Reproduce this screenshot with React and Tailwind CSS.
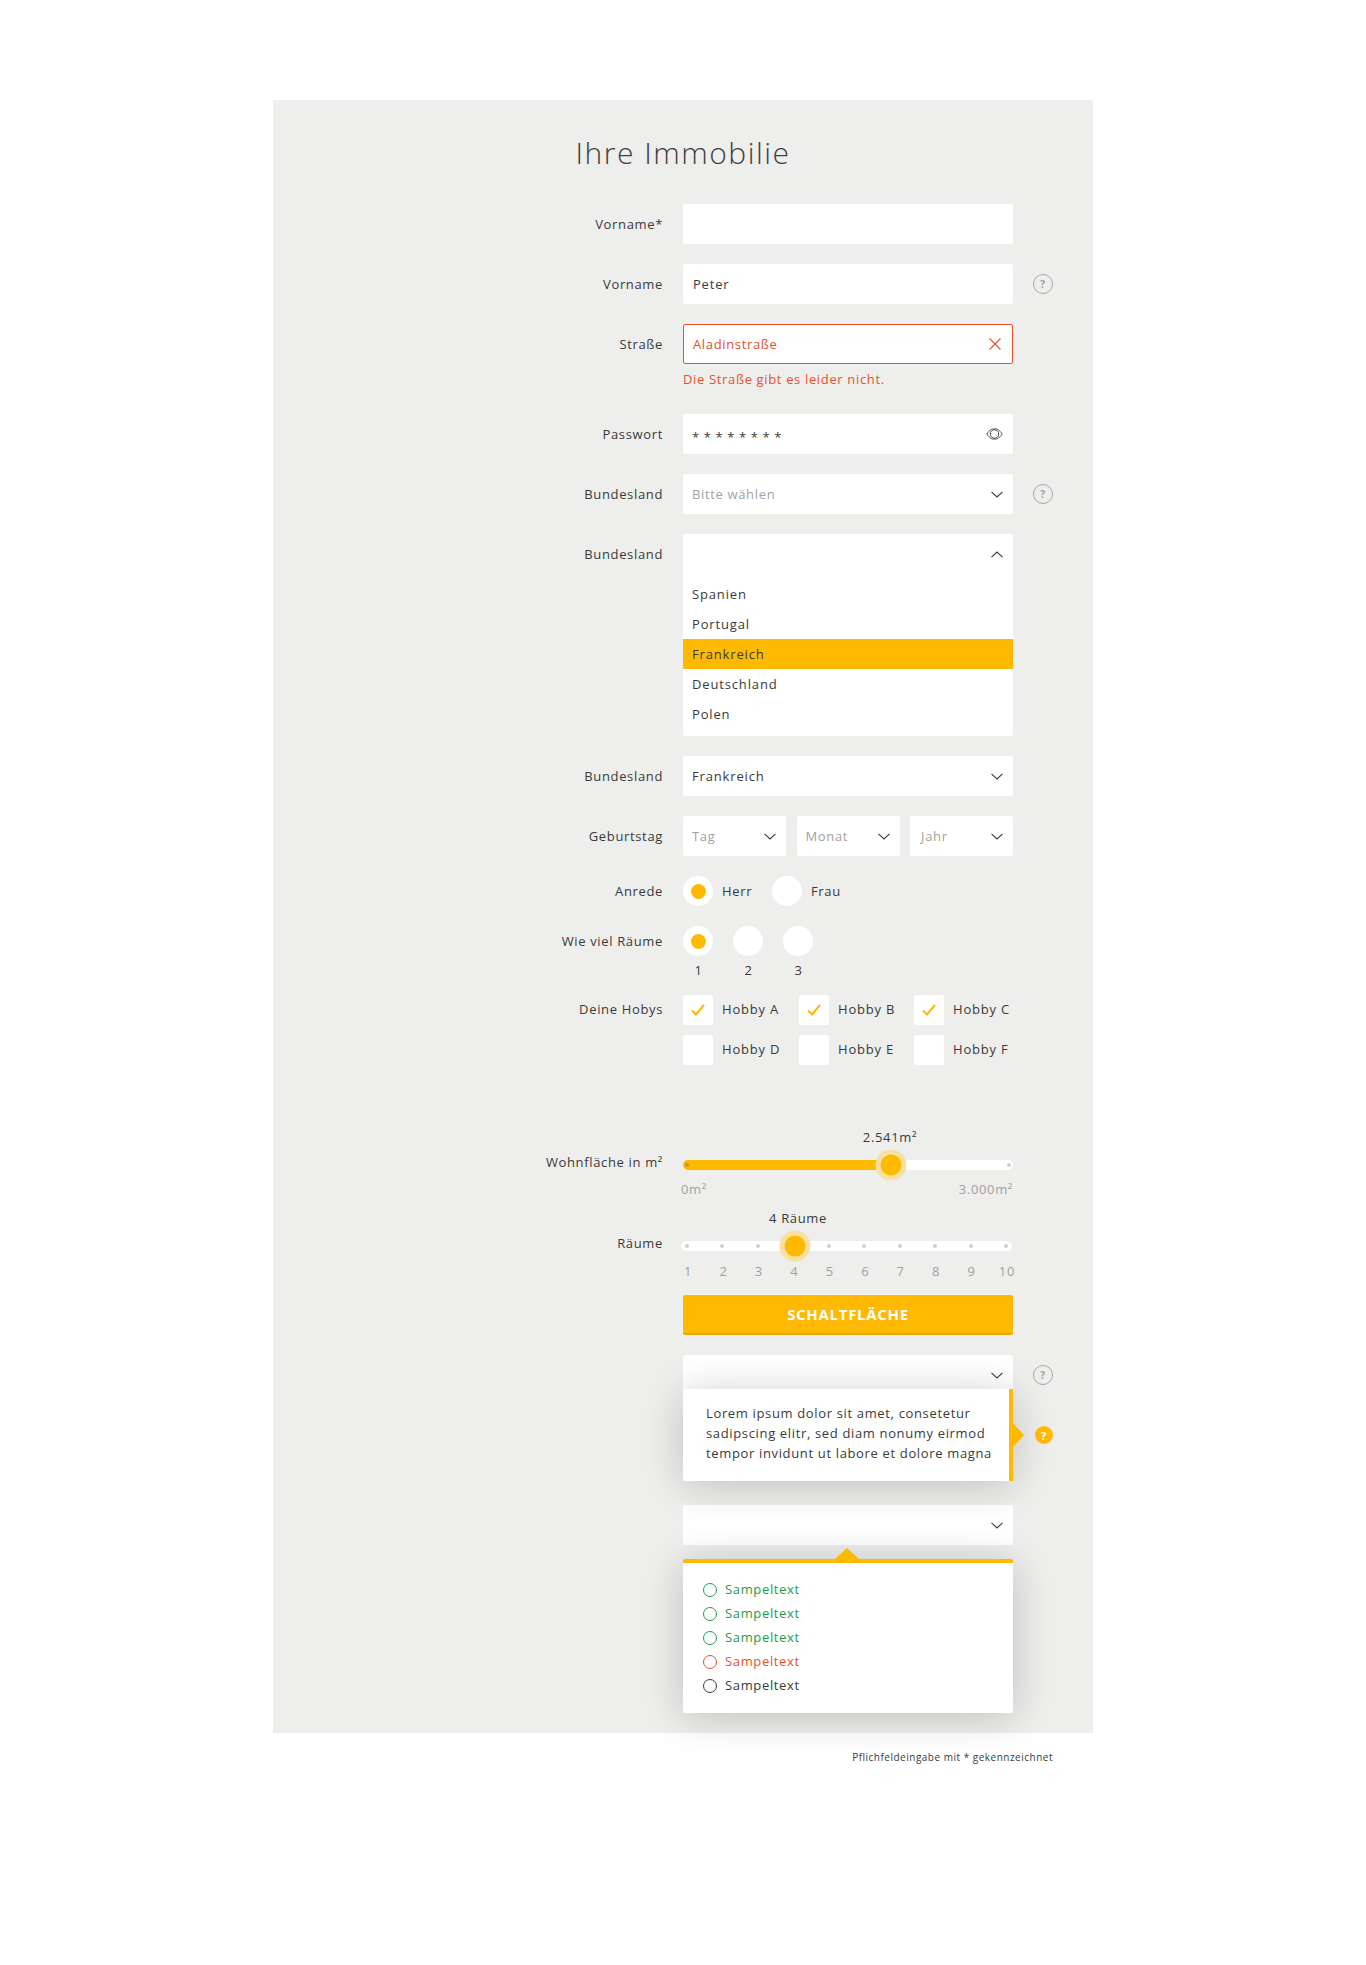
import React from 'react';

const Chevron = ({ up = false }) => (
  <svg width="12" height="7" viewBox="0 0 12 7" fill="none" stroke="#3a3a3a" strokeWidth="1.1" className={up ? 'rotate-180' : ''}>
    <path d="M0.5 0.8 L6 6 L11.5 0.8" />
  </svg>
);

const Help = () => (
  <span className="flex h-5 w-5 items-center justify-center rounded-full border border-[#a8a8a8] text-[10px] font-bold leading-none text-[#a0a0a0]">?</span>
);

const Row = ({ label, labelClass = 'leading-10', className = '', side = null, children }) => (
  <div className={`flex items-start ${className}`}>
    <div className={`w-[390px] shrink-0 text-right ${labelClass}`}>{label}</div>
    <div className="ml-5 w-[330px] shrink-0">{children}</div>
    {side && <div className="ml-5 flex h-10 w-5 items-center justify-center">{side}</div>}
  </div>
);

const Field = ({ children, className = '' }) => (
  <div className={`flex h-10 items-center justify-between rounded-[2px] bg-white leading-10 ${className}`}>{children}</div>
);

const Select = ({ text, placeholder = false, textClass = '', className = '' }) => (
  <Field className={`pl-[9px] pr-[10px] ${className}`}>
    <span className={`${placeholder ? 'text-[#a2a2a2]' : ''} ${textClass}`}>{text}</span>
    <Chevron />
  </Field>
);

const Radio = ({ on = false }) => (
  <span className="flex h-[30px] w-[30px] items-center justify-center rounded-full bg-white">
    {on && <span className="h-[15px] w-[15px] rounded-full bg-[#ffb900]" />}
  </span>
);

const Check = ({ on = false, label, className = '' }) => (
  <div className={`flex items-center ${className}`}>
    <span className="flex h-[30px] w-[30px] items-center justify-center rounded-[2px] bg-white">
      {on && (
        <svg width="14" height="12" viewBox="0 0 14 12" fill="none" stroke="#ffb900" strokeWidth="2">
          <path d="M1 6.5 L5 10.5 L13 1" />
        </svg>
      )}
    </span>
    <span className="ml-[9px] font-medium tracking-[0.8px]">{label}</span>
  </div>
);

const Thumb = ({ className }) => (
  <span className={`absolute top-1/2 flex h-[31px] w-[31px] -translate-x-1/2 -translate-y-1/2 items-center justify-center rounded-full bg-[#f6e0a2] ${className}`}>
    <span className="h-[21px] w-[21px] rounded-full bg-[#ffb900]" />
  </span>
);

const roomSteps = [1, 2, 3, 4, 5, 6, 7, 8, 9, 10];

const samples = [
  ['text-[#1b9e4b]', 'border-[#1b9e4b]'],
  ['text-[#1b9e4b]', 'border-[#1b9e4b]'],
  ['text-[#1b9e4b]', 'border-[#1b9e4b]'],
  ['text-[#e8502c]', 'border-[#e8502c]'],
  ['text-[#3a3a3a]', 'border-[#3a3a3a]'],
];

export default function App() {
  return (
    <div className="min-h-[1965px] bg-white pt-[100px] text-[13px] tracking-[0.65px] text-[#3a3a3a] [font-family:'Open_Sans',sans-serif]">
      <div className="mx-auto w-[820px] bg-[#eeeeec] pb-5 pt-[33px]">
        <h1 className="text-center text-[30px] font-light leading-10 tracking-[1.5px] text-[#3f3f3f]">Ihre Immobilie</h1>

        <Row label="Vorname*" className="mt-[31px]">
          <Field />
        </Row>
        <Row label="Vorname" className="mt-5" side={<Help />}>
          <Field className="px-[10px] font-medium tracking-[0.8px]">Peter</Field>
        </Row>
        <Row label="Straße" className="mt-5">
          <Field className="border border-[#e8502c] px-[9px] text-[#e8502c]">
            Aladinstraße
            <svg width="12" height="12" viewBox="0 0 12 12" fill="none" stroke="#e8502c" strokeWidth="1.1" className="mr-[2px]">
              <path d="M0.5 0.5 L11.5 11.5 M11.5 0.5 L0.5 11.5" />
            </svg>
          </Field>
          <p className="mt-[5px] leading-5 text-[#e8502c]">Die Straße gibt es leider nicht.</p>
        </Row>
        <Row label="Passwort" className="mt-[25px]">
          <Field className="pl-[9px] pr-[10px]">
            <span className="pt-[6px] tracking-[4.6px]">********</span>
            <svg width="17" height="12" viewBox="0 0 17 12" fill="none" stroke="#3a3a3a" strokeWidth="0.9">
              <path d="M0.8 6 C3.5 1.8 6 0.8 8.5 0.8 C11 0.8 13.5 1.8 16.2 6 C13.5 10.2 11 11.2 8.5 11.2 C6 11.2 3.5 10.2 0.8 6 Z" />
              <ellipse cx="8.5" cy="6" rx="4.2" ry="4.2" />
            </svg>
          </Field>
        </Row>
        <Row label="Bundesland" className="mt-5" side={<Help />}>
          <Select text="Bitte wählen" placeholder />
        </Row>
        <Row label="Bundesland" className="mt-5">
          <div className="rounded-[2px] bg-white pb-[7px]">
            <div className="flex h-10 items-center justify-end pr-[10px]">
              <Chevron up />
            </div>
            <div className="mt-[5px] font-medium tracking-[0.85px]">
              <div className="h-[30px] pl-[9px] leading-[30px]">Spanien</div>
              <div className="h-[30px] pl-[9px] leading-[30px]">Portugal</div>
              <div className="h-[30px] bg-[#ffb900] pl-[9px] leading-[30px]">Frankreich</div>
              <div className="h-[30px] pl-[9px] leading-[30px]">Deutschland</div>
              <div className="h-[30px] pl-[9px] leading-[30px]">Polen</div>
            </div>
          </div>
        </Row>
        <Row label="Bundesland" className="mt-5">
          <Select text="Frankreich" className="font-medium tracking-[0.85px]" />
        </Row>
        <Row label="Geburtstag" className="mt-5">
          <div className="grid grid-cols-3 gap-[10.5px]">
            <Select text="Tag" placeholder />
            <Select text="Monat" placeholder />
            <Select text="Jahr" placeholder textClass="ml-[2px]" />
          </div>
        </Row>
        <Row label="Anrede" labelClass="leading-[30px]" className="mt-5">
          <div className="flex items-center font-medium leading-[30px]">
            <Radio on />
            <span className="ml-[9px] w-[50px]">Herr</span>
            <Radio />
            <span className="ml-[9px]">Frau</span>
          </div>
        </Row>
        <Row label="Wie viel Räume" labelClass="leading-[30px]" className="mt-5">
          <div className="flex gap-5">
            {[1, 2, 3].map((n) => (
              <div key={n} className="w-[30px] text-center">
                <Radio on={n === 1} />
                <div className="mt-[4px] pl-px leading-5">{n}</div>
              </div>
            ))}
          </div>
        </Row>
        <Row label="Deine Hobys" labelClass="leading-[29px]" className="mt-[15px]">
          <div className="grid grid-cols-[116px_115px_1fr] gap-y-[10px]">
            <Check on label="Hobby A" />
            <Check on label="Hobby B" />
            <Check on label="Hobby C" />
            <Check label="Hobby D" />
            <Check label="Hobby E" />
            <Check label="Hobby F" />
          </div>
        </Row>

        <Row label="Wohnfläche in m²" labelClass="mt-[25px] leading-5" className="mt-[62px]">
          <div className="w-[414px] text-center leading-5">2.541m²</div>
          <div className="relative mt-[13px] flex h-[10px] items-center justify-between rounded-full bg-white px-[2px]">
            <span className="absolute inset-y-0 left-0 w-[207px] rounded-l-full bg-[#ffb900]" />
            <span className="relative h-1 w-1 rounded-full bg-[#c79a1e]" />
            <span className="relative h-1 w-1 rounded-full bg-[#cfcfcf]" />
            <Thumb className="left-[208px]" />
          </div>
          <div className="-ml-[2px] mt-[9px] flex justify-between leading-5 text-[#a2a2a2]">
            <span>0m²</span>
            <span>3.000m²</span>
          </div>
        </Row>

        <Row label="Räume" labelClass="mt-[25px] leading-5" className="mt-[9px]">
          <div className="w-[230px] text-center leading-5">4 Räume</div>
          <div className="relative -ml-[2px] mt-[13px] flex h-[10px] w-[331px] items-center justify-between rounded-full bg-white px-1">
            {roomSteps.map((n) => (
              <span key={n} className="h-1 w-1 rounded-full bg-[#cfcfcf]" />
            ))}
            <Thumb className="left-[114px]" />
          </div>
          <div className="-ml-[1px] mt-[10px] flex w-[331px] justify-between px-[2px] leading-5 text-[#a2a2a2]">
            {roomSteps.map((n) => (
              <span key={n} className="flex w-2 justify-center">{n}</span>
            ))}
          </div>
        </Row>

        <Row label="" className="mt-[14px]">
          <button className="h-10 w-full rounded-[2px] border-b-2 border-[#e8a800] bg-[#ffb900] text-[15px] font-bold tracking-[0.7px] text-white">SCHALTFLÄCHE</button>
        </Row>

        <Row label="" className="mt-5" side={<Help />}>
          <Select text="" />
        </Row>

        <div className="relative z-10 -mt-[6px] flex">
          <div className="ml-[410px] w-[330px] rounded-[2px] bg-white shadow-[0_4px_40px_rgba(0,0,0,0.2)]">
            <div className="relative h-[92px] border-r-4 border-[#ffb900] pl-[23px] pt-[14px] leading-5">
              <p>Lorem ipsum dolor sit amet, consetetur</p>
              <p>sadipscing elitr, sed diam nonumy eirmod</p>
              <p>tempor invidunt ut labore et dolore magna</p>
              <svg width="11" height="24" viewBox="0 0 11 24" className="absolute left-full top-[34px] ml-1" fill="#ffb900">
                <path d="M0 0 L11 12 L0 24 Z" />
              </svg>
            </div>
          </div>
          <span className="ml-[22px] mt-[37px] flex h-[18px] w-[18px] items-center justify-center rounded-full bg-[#ffb900] text-[11px] font-bold leading-none text-white">?</span>
        </div>

        <Row label="" className="mt-6">
          <Select text="" />
        </Row>

        <div className="relative z-10 ml-[410px] mt-[14px] w-[330px] rounded-[2px] border-t-4 border-[#ffb900] bg-white pb-[15px] pl-5 pt-[15px] shadow-[0_4px_40px_rgba(0,0,0,0.2)]">
          <svg width="24" height="11" viewBox="0 0 24 11" className="absolute -top-[15px] left-[152px]" fill="#ffb900">
            <path d="M0 11 L12 0 L24 11 Z" />
          </svg>
          {samples.map(([text, border], i) => (
            <div key={i} className={`flex h-6 items-center ${text}`}>
              <span className={`h-[14px] w-[14px] rounded-full border-[1.5px] ${border}`} />
              <span className="ml-2">Sampeltext</span>
            </div>
          ))}
        </div>
      </div>
      <div className="mx-auto mt-[14px] w-[820px] pr-10 text-right text-[10px] leading-5 tracking-[0.5px]">Pflichfeldeingabe mit * gekennzeichnet</div>
    </div>
  );
}
